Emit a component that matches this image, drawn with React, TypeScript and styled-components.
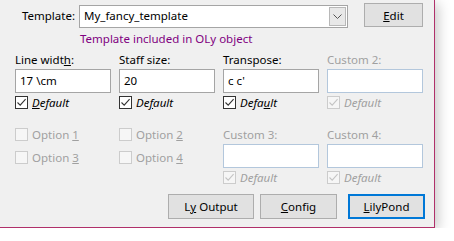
import styled, { createGlobalStyle } from 'styled-components';

const GlobalStyle = createGlobalStyle`
	html, body {
		margin: 0;
		padding: 0;
		background: #ffffff;
	}
	body {
		font-family: 'Noto Sans', 'Open Sans', sans-serif;
		font-size: 11.5px;
		color: #000000;
	}
`;

interface IField {
	label: string;
	labelKey?: number;
	value?: string;
	enabled: boolean;
	defaultKey?: number;
}

const topFields: IField[] = [
	{ label: 'Line width:', labelKey: 9, value: '17 \\cm', enabled: true, defaultKey: 0 },
	{ label: 'Staff size:', value: '20', enabled: true, defaultKey: 2 },
	{ label: 'Transpose:', value: "c c'", enabled: true, defaultKey: 4 },
	{ label: 'Custom 2:', enabled: false },
];

const lowerFields: IField[] = [
	{ label: 'Custom 3:', enabled: false },
	{ label: 'Custom 4:', enabled: false },
];

/** underline the access key letter */
const withKey = (text: string, key?: number) => {
	if (key === undefined) return text;
	return (
		<span>
			{text.slice(0, key)}
			<u>{text[key]}</u>
			{text.slice(key + 1)}
		</span>
	);
};

const CheckBox = ({ checked, enabled }: { checked: boolean; enabled: boolean }) => (
	<Box $enabled={enabled}>
		{checked && (
			<svg width="11" height="11" viewBox="0 0 11 11">
				<path d="M1.5 5.5 L4.2 8.2 L9.6 2.2" fill="none" stroke={enabled ? '#333' : '#c4c4c4'} strokeWidth="1.1" />
			</svg>
		)}
	</Box>
);

const Field = ({ field }: { field: IField }) => (
	<FieldBox>
		<FieldLabel $enabled={field.enabled}>{withKey(field.label, field.labelKey)}</FieldLabel>
		<TextInput $enabled={field.enabled}>{field.value}</TextInput>
		<CheckRow>
			<CheckBox checked enabled={field.enabled} />
			<DefaultText $enabled={field.enabled}>{withKey('Default', field.defaultKey)}</DefaultText>
		</CheckRow>
	</FieldBox>
);

const Option = ({ n }: { n: number }) => (
	<OptionRow>
		<CheckBox checked={false} enabled={false} />
		<OptionText>
			Option <u>{n}</u>
		</OptionText>
	</OptionRow>
);

const App = () => {
	return (
		<>
			<GlobalStyle />
			<Dialog>
				<TopRow>
					<TemplateLabel>Template:</TemplateLabel>
					<Combo>
						<ComboText>My_fancy_template</ComboText>
						<ComboButton>
							<svg width="9" height="5" viewBox="0 0 9 5">
								<path d="M0.5 0.5 L4.5 4.5 L8.5 0.5" fill="none" stroke="#555" strokeWidth="1" />
							</svg>
						</ComboButton>
					</Combo>
					<EditButton>{withKey('Edit', 0)}</EditButton>
				</TopRow>
				<Hint>Template included in OLy object</Hint>
				<FieldGrid>
					{topFields.map((f) => (
						<Field key={f.label} field={f} />
					))}
				</FieldGrid>
				<LowerGrid>
					<OptionColumn>
						<Option n={1} />
						<Option n={3} />
					</OptionColumn>
					<OptionColumn>
						<Option n={2} />
						<Option n={4} />
					</OptionColumn>
					{lowerFields.map((f) => (
						<Field key={f.label} field={f} />
					))}
				</LowerGrid>
				<ButtonRow>
					<Button $width={86}>{withKey('Ly Output', 1)}</Button>
					<Button $width={77}>{withKey('Config', 0)}</Button>
					<Button $width={77} $focus>
						{withKey('LilyPond', 0)}
					</Button>
				</ButtonRow>
			</Dialog>
		</>
	);
};

export default App;

const Dialog = styled.div`
	width: 435px;
	height: 228px;
	box-sizing: border-box;
	background: #f0f0f0;
	border-right: 1px solid #b0306a;
	border-bottom: 1px solid #b0306a;
	box-shadow: 3px 3px 12px rgba(0, 0, 0, 0.22);
	display: flex;
	flex-direction: column;
`;

const TopRow = styled.div`
	display: flex;
	align-items: flex-start;
	margin-top: 3px;
	height: 25px;
`;

const TemplateLabel = styled.div`
	width: 75px;
	text-align: right;
	margin-top: 5px;
	margin-right: 4px;
`;

const Combo = styled.div`
	margin-top: 2px;
	width: 269px;
	height: 23px;
	box-sizing: border-box;
	border: 1px solid #a5a5a5;
	background: #ffffff;
	display: flex;
	align-items: stretch;
`;

const ComboText = styled.div`
	flex: 1;
	padding-left: 4px;
	line-height: 20px;
`;

const ComboButton = styled.div`
	width: 17px;
	margin: 1px;
	box-sizing: border-box;
	border: 1px solid #b8b8b8;
	background: #e8e8e8;
	display: flex;
	align-items: center;
	justify-content: center;
`;

const EditButton = styled.div`
	margin-left: 16px;
	width: 59px;
	height: 24px;
	box-sizing: border-box;
	border: 1px solid #adadad;
	background: #e1e1e1;
	display: flex;
	align-items: center;
	justify-content: center;
`;

const Hint = styled.div`
	margin-left: 80px;
	margin-top: 3px;
	color: #800080;
	line-height: 16px;
`;

const FieldGrid = styled.div`
	display: grid;
	grid-template-columns: repeat(4, 96px);
	column-gap: 8px;
	margin-left: 15px;
	margin-top: 5px;
`;

const LowerGrid = styled(FieldGrid)`
	margin-top: 18px;
`;

const FieldBox = styled.div`
	display: flex;
	flex-direction: column;
`;

const FieldLabel = styled.div<{ $enabled: boolean }>`
	color: ${(p) => (p.$enabled ? '#000000' : '#a0a0a0')};
	line-height: 16px;
	margin-bottom: 1px;
`;

const TextInput = styled.div<{ $enabled: boolean }>`
	height: 24px;
	box-sizing: border-box;
	border: 1px solid ${(p) => (p.$enabled ? '#a5a5a5' : '#b3c7dc')};
	background: #ffffff;
	padding-left: 4px;
	line-height: 21px;
`;

const CheckRow = styled.div`
	display: flex;
	align-items: center;
	gap: 4px;
	margin-top: 2px;
	height: 14px;
`;

const Box = styled.div<{ $enabled: boolean }>`
	width: 13px;
	height: 13px;
	box-sizing: border-box;
	border: 1px solid ${(p) => (p.$enabled ? '#333333' : '#cccccc')};
	background: ${(p) => (p.$enabled ? '#ffffff' : '#f6f6f6')};
	display: flex;
	align-items: center;
	justify-content: center;
`;

const DefaultText = styled.span<{ $enabled: boolean }>`
	font-style: italic;
	color: ${(p) => (p.$enabled ? '#000000' : '#a0a0a0')};
`;

const OptionColumn = styled.div`
	display: flex;
	flex-direction: column;
	gap: 10px;
	padding-top: 1px;
`;

const OptionRow = styled.div`
	display: flex;
	align-items: center;
	gap: 4px;
	height: 13px;
`;

const OptionText = styled.span`
	color: #a0a0a0;
`;

const ButtonRow = styled.div`
	display: flex;
	justify-content: flex-end;
	gap: 6px;
	margin-top: 10px;
	padding-right: 9px;
`;

const Button = styled.div<{ $width: number; $focus?: boolean }>`
	width: ${(p) => p.$width}px;
	height: 25px;
	box-sizing: border-box;
	border: ${(p) => (p.$focus ? '2px solid #0078d7' : '1px solid #adadad')};
	background: #e1e1e1;
	display: flex;
	align-items: center;
	justify-content: center;
	margin-left: ${(p) => (p.$focus ? '5px' : '0')};
`;
